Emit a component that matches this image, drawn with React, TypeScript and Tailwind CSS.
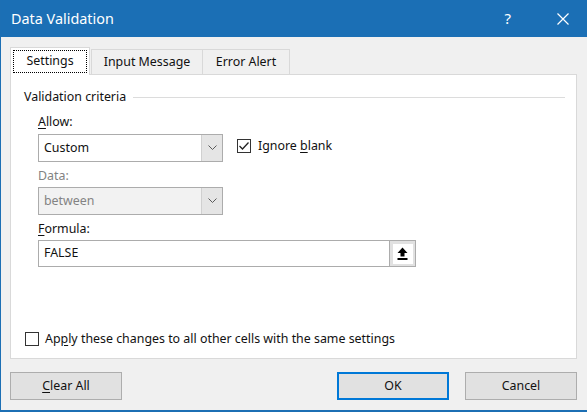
import { useState } from 'react'

const font = { fontFamily: '"Segoe UI", "Noto Sans", "Liberation Sans", sans-serif' }

function Chevron({ color = '#5a5a5a' }: { color?: string }) {
  return (
    <svg width="9" height="6" viewBox="0 0 9 6">
      <path d="M0.5 0.5 L4.5 4.5 L8.5 0.5" fill="none" stroke={color} strokeWidth="1" />
    </svg>
  )
}

function Combo({ value, disabled }: { value: string; disabled?: boolean }) {
  return (
    <div
      className={
        'flex h-[28px] w-[185px] border border-[#acacac] ' +
        (disabled ? 'bg-[#f2f2f2] text-[#838383]' : 'bg-white text-[#111]')
      }
    >
      <div className="flex flex-1 items-center pl-[5px]">{value}</div>
      <div className="flex w-[21px] items-center justify-center border-l border-[#d0d0d0] bg-[#e5e5e5]">
        <Chevron />
      </div>
    </div>
  )
}

function CheckBox({ checked }: { checked: boolean }) {
  return (
    <div className="flex h-[14px] w-[14px] items-center justify-center border border-[#333] bg-white">
      {checked && (
        <svg width="12" height="12" viewBox="0 0 12 12">
          <path d="M1.5 6 L4.5 9 L10.5 2.5" fill="none" stroke="#222" strokeWidth="1.3" />
        </svg>
      )}
    </div>
  )
}

function DialogButton({ children, primary }: { children: React.ReactNode; primary?: boolean }) {
  return (
    <button
      className={
        'h-[28px] w-[112px] bg-[#e1e1e1] text-[12.4px] text-[#111] ' +
        (primary ? 'border-2 border-[#0078d7]' : 'border border-[#adadad]')
      }
    >
      {children}
    </button>
  )
}

export default function App() {
  const [ignoreBlank] = useState(true)
  return (
    <div
      className="flex h-[412px] w-[587px] flex-col border-b-2 border-l border-[#1c6fb4] bg-[#f0f0f0] text-[12.4px] text-[#111]"
      style={font}
    >
      <div className="flex h-[37px] shrink-0 items-center bg-[#1b6fb5] pl-[10px] pr-[18px] text-white">
        <div className="flex-1 text-[14.4px]">Data Validation</div>
        <div className="mr-[46px] text-[15px]">?</div>
        <svg width="12" height="12" viewBox="0 0 12 12">
          <path d="M0.5 0.5 L11.5 11.5 M11.5 0.5 L0.5 11.5" stroke="white" strokeWidth="1.2" />
        </svg>
      </div>

      <div className="flex flex-1 flex-col pl-[9px] pr-[10px] pt-[10px]">
        <div className="relative z-10 -mb-px flex items-end">
          <div className="flex h-[28px] w-[80px] items-start justify-center border border-b-0 border-[#d9d9d9] bg-white pt-[2px]">
            <div className="flex h-[23px] w-[74px] items-center justify-center border border-dotted border-black">
              Settings
            </div>
          </div>
          <div className="ml-[1px] flex h-[26px] w-[112px] items-center justify-center border border-b-0 border-[#d9d9d9]">
            Input Message
          </div>
          <div className="flex h-[26px] w-[87px] items-center justify-center border border-b-0 border-l-0 border-[#d9d9d9]">
            Error Alert
          </div>
        </div>

        <div className="flex h-[285px] flex-col border border-[#d9d9d9] bg-white pl-[13px] pr-[11px] pt-[14px]">
          <div className="flex h-[16px] items-center">
            <span className="leading-[16px]">Validation criteria</span>
            <div className="ml-[7px] h-px flex-1 bg-[#dcdcdc]" />
          </div>

          <div className="ml-[14px] mt-[9px] flex flex-col">
            <div className="leading-[16px]">
              <span className="underline underline-offset-2">A</span>llow:
            </div>
            <div className="mt-[4px] flex items-start">
              <Combo value="Custom" />
              <div className="ml-[14px] mt-[3px] flex items-center gap-[7px]">
                <CheckBox checked={ignoreBlank} />
                <span>
                  Ignore <span className="underline underline-offset-2">b</span>lank
                </span>
              </div>
            </div>

            <div className="mt-[6px] leading-[16px] text-[#838383]">Data:</div>
            <div className="mt-[3px]">
              <Combo value="between" disabled />
            </div>

            <div className="mt-[6px] leading-[16px]">
              <span className="underline underline-offset-2">F</span>ormula:
            </div>
            <div className="mt-[3px] flex h-[27px] w-[378px] border border-[#acacac] bg-white">
              <div className="flex flex-1 items-center pl-[5px]">FALSE</div>
              <div className="flex w-[26px] items-center justify-center border-l border-[#acacac] bg-[#e1e1e1]">
                <div className="flex h-[20px] w-[20px] items-center justify-center bg-white">
                  <svg width="11" height="14" viewBox="0 0 11 14">
                    <path d="M5.5 0.5 L10.5 6 L7.5 6 L7.5 9.5 L3.5 9.5 L3.5 6 L0.5 6 Z" fill="#000" />
                    <rect x="0.5" y="11" width="10" height="2" fill="#000" />
                  </svg>
                </div>
              </div>
            </div>
          </div>

          <div className="mt-[63px] flex items-center gap-[6px] pl-px">
            <CheckBox checked={false} />
            <span>
              Ap<span className="underline underline-offset-2">p</span>ly these changes to all other
              cells with the same settings
            </span>
          </div>
        </div>

        <div className="mt-[13px] flex items-center">
          <DialogButton>
            <span className="underline underline-offset-2">C</span>lear All
          </DialogButton>
          <div className="flex-1" />
          <DialogButton primary>OK</DialogButton>
          <div className="w-[16px]" />
          <DialogButton>Cancel</DialogButton>
        </div>
      </div>
    </div>
  )
}
